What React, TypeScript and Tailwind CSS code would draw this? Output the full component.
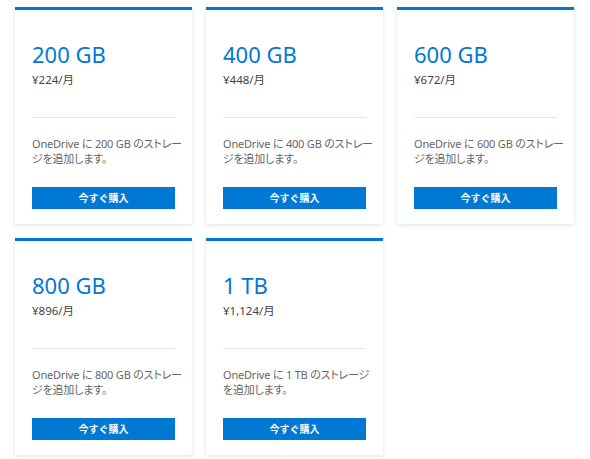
import React from 'react';

interface Plan {
  size: string;
  price: string;
  lines: [string, string];
}

const plans: Plan[] = [
  { size: '200 GB', price: '¥224/月', lines: ['OneDrive に 200 GB のストレー', 'ジを追加します。'] },
  { size: '400 GB', price: '¥448/月', lines: ['OneDrive に 400 GB のストレー', 'ジを追加します。'] },
  { size: '600 GB', price: '¥672/月', lines: ['OneDrive に 600 GB のストレー', 'ジを追加します。'] },
  { size: '800 GB', price: '¥896/月', lines: ['OneDrive に 800 GB のストレー', 'ジを追加します。'] },
  { size: '1 TB', price: '¥1,124/月', lines: ['OneDrive に 1 TB のストレージ', 'を追加します。'] },
];

const PlanCard: React.FC<{ plan: Plan }> = ({ plan }) => {
  return (
    <div className="flex flex-col bg-white border-t-[3px] border-[#0078d4] shadow-[0_1px_4px_rgba(0,0,0,0.12)] px-[17px] pt-[29px] pb-[15px]">
      <h2 className="text-[22px] leading-[30px] text-[#0078d4]">{plan.size}</h2>
      <p className="mt-[3px] text-[11.5px] leading-[16px] text-[#444] [font-feature-settings:'palt']">{plan.price}</p>
      <div className="mt-[29px] h-px bg-[#e6e6e6]" />
      <p className="mt-[18px] text-[11px] leading-[15px] tracking-[-0.2px] text-[#666] whitespace-nowrap [font-feature-settings:'palt']">
        <span className="block">{plan.lines[0]}</span>
        <span className="block">{plan.lines[1]}</span>
      </p>
      <button className="mt-[21px] h-[22px] w-full bg-[#0078d4] text-white text-[10px] font-bold">
        今すぐ購入
      </button>
    </div>
  );
};

const App: React.FC = () => {
  return (
    <div
      className="min-h-screen bg-white pl-[15px] pt-[7px]"
      style={{ fontFamily: '"Noto Sans", "Noto Sans CJK JP", sans-serif' }}
    >
      <div className="grid grid-cols-[177px_177px_177px] gap-[14px]">
        {plans.map((plan) => (
          <PlanCard key={plan.size} plan={plan} />
        ))}
      </div>
    </div>
  );
};

export default App;
